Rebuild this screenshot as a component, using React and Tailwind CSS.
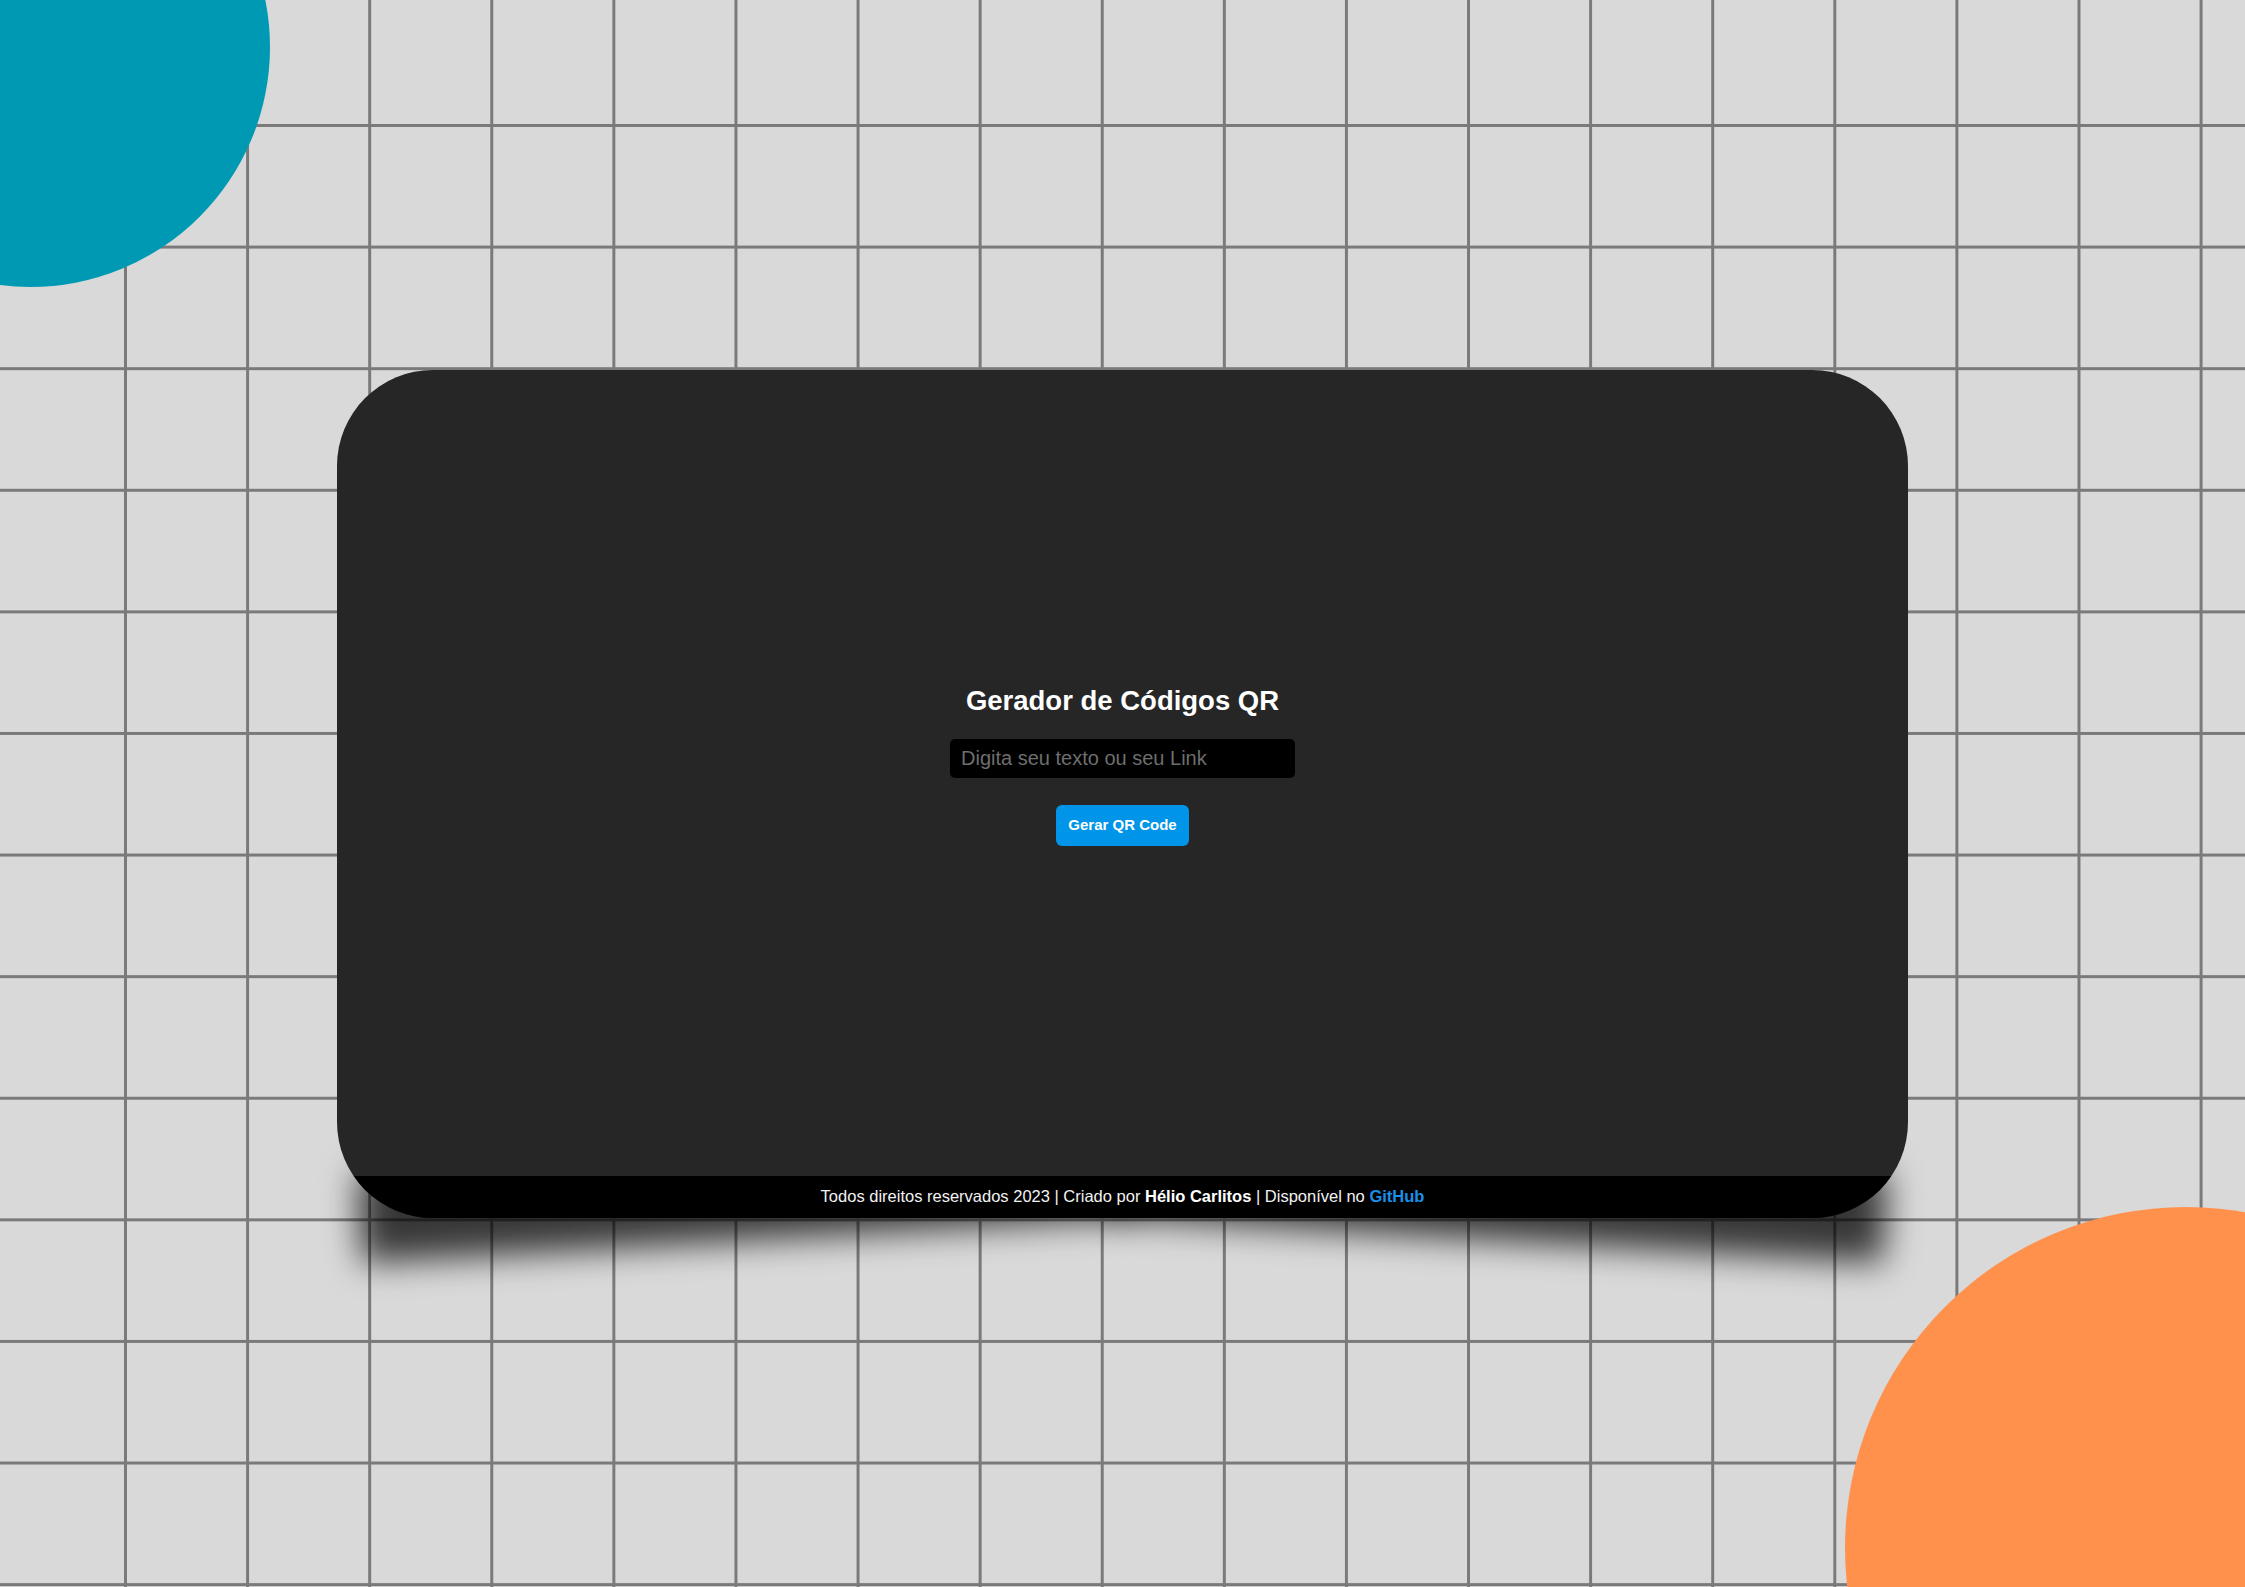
import React from "react";

export default function App() {
  return (
    <div className="relative w-full h-[1587px] overflow-hidden bg-[#d9d9d9] flex items-center justify-center font-['Liberation_Sans',Arial,sans-serif]">
      {/* grid background layers */}
      <div className="absolute left-[123.5px] top-0 right-0 bottom-0 bg-[linear-gradient(to_right,#7a7a7a_3px,transparent_3px)] bg-[length:122.1px_100%]" />
      <div className="absolute left-0 top-[123.5px] right-0 bottom-0 bg-[linear-gradient(to_bottom,#7a7a7a_3px,transparent_3px)] bg-[length:100%_121.6px]" />

      {/* decorative circles */}
      <div className="absolute left-[-210px] top-[-193px] w-[480px] h-[480px] rounded-full bg-[#0099b3]" />
      <div className="absolute left-[1845px] top-[1207px] w-[682px] h-[682px] rounded-full bg-[#ff914d]" />

      {/* card with lifted-corner shadows */}
      <div className="relative isolate">
        <div className="absolute z-0 left-[22px] bottom-[-22px] w-[770px] h-[90px] bg-black/75 blur-[17px] rotate-[-3.4deg]" />
        <div className="absolute z-0 right-[22px] bottom-[-22px] w-[770px] h-[90px] bg-black/75 blur-[17px] rotate-[3.4deg]" />
        <div className="relative z-10 w-[1571px] h-[848px] rounded-[96px] bg-[#262626] overflow-hidden flex flex-col">
          <main className="flex-1 flex flex-col items-center justify-center pb-[14px]">
            <h1 className="text-white font-bold text-[27.5px] leading-[32px]">
              Gerador de Códigos QR
            </h1>
            <input
              type="text"
              placeholder="Digita seu texto ou seu Link"
              className="mt-[22px] w-[345px] h-[39px] rounded-[5px] bg-black px-[11px] text-[20px] text-white placeholder:text-[#6e6e6e] outline-none border-0"
            />
            <button className="mt-[27px] h-[41px] px-[12px] rounded-[6px] bg-[#0095e8] text-white font-bold text-[15px]">
              Gerar QR Code
            </button>
          </main>
          <footer className="h-[42px] bg-black flex items-center justify-center text-[16.5px] text-[#f2f2f2]">
            <p>
              Todos direitos reservados 2023 | Criado por{" "}
              <b className="font-bold text-white">Hélio Carlitos</b> | Disponível no{" "}
              <a className="font-bold text-[#1a8fe8]">GitHub</a>
            </p>
          </footer>
        </div>
      </div>
    </div>
  );
}
